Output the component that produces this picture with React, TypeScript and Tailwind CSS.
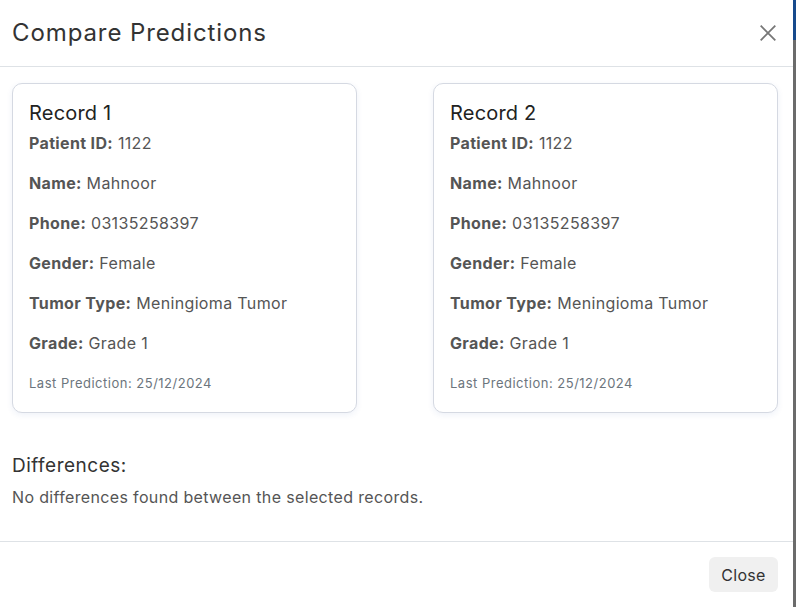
import React from "react";

const rows: [string, string][] = [
  ["Patient ID:", "1122"],
  ["Name:", "Mahnoor"],
  ["Phone:", "03135258397"],
  ["Gender:", "Female"],
  ["Tumor Type:", "Meningioma Tumor"],
  ["Grade:", "Grade 1"],
];

function RecordCard({ title }: { title: string }) {
  return (
    <div className="w-[345px] rounded-[10px] border border-[#d5d9e2] bg-white px-4 pt-[14px] pb-[17px] shadow-[0_2px_6px_rgba(40,80,160,0.08)]">
      <h3 className="text-[20px] leading-[30px] tracking-[0.2px] text-[#222]">{title}</h3>
      <div className="mt-[3px] flex flex-col gap-[16px]">
        {rows.map(([k, v]) => (
          <p key={k} className="text-[16px] leading-[24px] tracking-[0.35px] text-[#555]">
            <span className="font-bold">{k}</span> {v}
          </p>
        ))}
        <p className="text-[13px] leading-[24px] tracking-[0.5px] text-[#6c757d]">Last Prediction: 25/12/2024</p>
      </div>
    </div>
  );
}

export default function App() {
  return (
    <div className="flex h-[607px] w-[796px] bg-[#6b6b6b]" style={{ fontFamily: "Inter, 'Noto Sans', sans-serif" }}>
      <div className="flex h-full w-[793px] flex-col bg-white">
        <div className="flex h-[67px] items-center justify-between border-b border-[#dee2e6] pl-3 pr-[16px]">
          <h2 className="text-[24px] tracking-[0.9px] text-[#333]">Compare Predictions</h2>
          <svg width="18" height="18" viewBox="0 0 16 16" className="text-[#777]">
            <path d="M1.5 1.5 L14.5 14.5 M14.5 1.5 L1.5 14.5" stroke="currentColor" strokeWidth="1.6" />
          </svg>
        </div>
        <div className="flex-1 px-3 pt-4">
          <div className="flex justify-between pr-[3px]">
            <RecordCard title="Record 1" />
            <RecordCard title="Record 2" />
          </div>
          <h4 className="mt-[39px] text-[19px] leading-[27px] tracking-[0.5px] text-[#333]">Differences:</h4>
          <p className="mt-[6px] text-[16px] tracking-[0.35px] text-[#555]">No differences found between the selected records.</p>
        </div>
        <div className="flex h-[66px] items-center justify-end border-t border-[#dee2e6] pr-[15px]">
          <button className="h-[35px] w-[69px] rounded-[6px] bg-[#f0f0f0] text-[16px] tracking-[0.3px] text-[#333]">Close</button>
        </div>
      </div>
      <div className="flex w-[3px] flex-col">
        <div className="h-[40px] bg-[#174a8c]" />
        <div className="flex-1 bg-[#6b6b6b]" />
      </div>
    </div>
  );
}
